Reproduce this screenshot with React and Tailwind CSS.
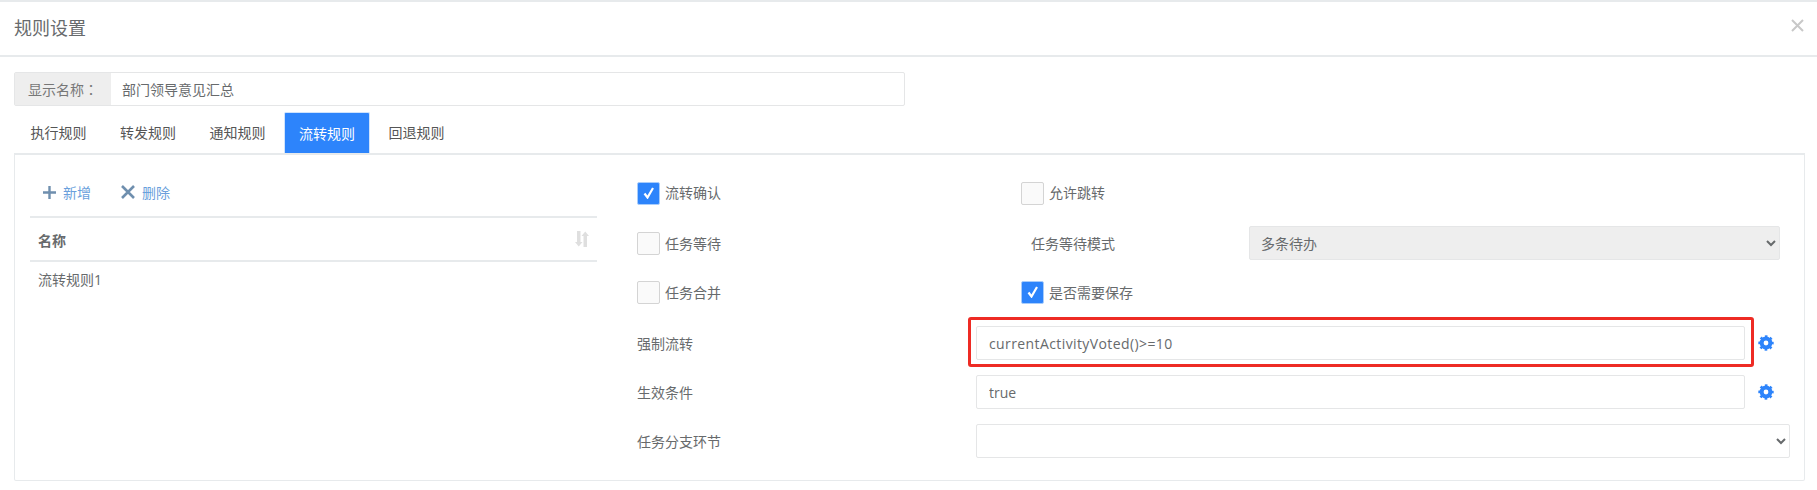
import React from "react";

function Box({ checked }) {
  return (
    <span className={"flex h-[23px] w-[23px] shrink-0 items-center justify-center rounded-[2px] border " + (checked ? "border-[#a9cdfb] bg-[#2d84fb]" : "border-[#d4d4d4] bg-[#fafafa]")}>
      {checked ? (
        <svg width="12" height="12" viewBox="0 0 12 12" fill="none" stroke="#fff" strokeWidth="2.2">
          <path d="M1.500 6.500 4.500 10.500 10 1" />
        </svg>
      ) : null}
    </span>
  );
}

function CheckItem({ checked, label, raised }) {
  return (
    <div className="flex items-center gap-[5px]">
      <Box checked={checked} />
      <span className={raised ? "pb-[1px]" : ""}>{label}</span>
    </div>
  );
}

function Tab({ label, active }) {
  return (
    <div className={"flex h-[41px] w-[86px] items-center justify-center " + (active ? "rounded-t-[2px] border border-b-0 border-[#cfe3fd] bg-[#2d84fb] text-white" : "text-[#555]")}>
      {label}
    </div>
  );
}

function Gear() {
  return (
    <svg width="16" height="16" viewBox="0 0 16 16" fill="none" stroke="currentColor" className="ml-[13px] text-[#2d84fb]">
      <circle cx="8" cy="8" r="4.4" strokeWidth="4" />
      <circle cx="8" cy="8" r="6.6" strokeWidth="2.2" strokeDasharray="2.6 2.58" strokeDashoffset="1.3" />
    </svg>
  );
}

const field = "h-[34px] rounded-[2px] border border-[#e5e6e7] bg-white px-[12px] text-[14px] text-[#676a6c]";

export default function App() {
  return (
    <div className="h-[490px] w-full overflow-hidden border-t-2 border-[#e7eaec] bg-white font-['Open_Sans','Noto_Sans_CJK_SC',sans-serif] text-[14px] text-[#676a6c]">
      <div className="flex h-[55px] items-center justify-between border-b-2 border-[#e7eaec] pl-[14px] pr-[13px]">
        <span className="text-[18px]">规则设置</span>
        <svg width="13" height="13" viewBox="0 0 13 13" stroke="#c8c8c8" strokeWidth="2" className="mb-[6px]">
          <path d="M1 1 12 12M12 1 1 12" />
        </svg>
      </div>

      <div className="px-[14px] pt-[15px]">
        <div className="flex h-[34px] w-[891px] rounded-[2px] border border-[#e5e6e7]">
          <div className="flex w-[96px] items-center justify-center bg-[#eeeeee] text-[#777]">
            显示名称<span className="font-['Noto_Sans_CJK_TC']">：</span>
          </div>
          <div className="flex flex-1 items-center pl-[11px]">部门领导意见汇总</div>
        </div>

        <div className="mt-[6px] flex gap-[3.5px] pl-[1.5px]">
          <Tab label="执行规则" />
          <Tab label="转发规则" />
          <Tab label="通知规则" />
          <Tab label="流转规则" active />
          <Tab label="回退规则" />
        </div>

        <div className="flex h-[328px] w-[1791px] gap-[40px] rounded-b-[2px] border border-t-2 border-[#e7eaec] pl-[15px]">
          <div className="w-[567px]">
            <div className="flex h-[61px] items-center pl-[13px] pt-[13px] text-[#6a9fdc]">
              <svg width="13" height="13" viewBox="0 0 13 13" stroke="#6f8fae" strokeWidth="2.4">
                <path d="M6.500 0V13M0 6.500H13" />
              </svg>
              <span className="ml-[7px]">新增</span>
              <svg width="14" height="14" viewBox="0 0 14 14" stroke="#6f8fae" strokeWidth="2.6" className="ml-[30px]">
                <path d="M1 1 13 13M13 1 1 13" />
              </svg>
              <span className="ml-[7px]">删除</span>
            </div>
            <div className="flex h-[46px] items-center justify-between border-y-2 border-[#e7eaec] pl-[8px] pr-[8px] font-semibold text-[#676a6c]">
              <span className="pt-[2px]">名称</span>
              <svg width="14" height="16" viewBox="0 0 14 16" className="text-[#dfdfdf]" fill="currentColor">
                <path d="M2 0h3.500v11H7.500L3.750 15.500 0 11H2z" />
                <path d="M8.500 16h3.500V5H14L10.250.5 6.500 5H8.500z" />
              </svg>
            </div>
            <div className="pl-[8px] pt-[7px]">流转规则1</div>
          </div>

          <div className="flex-1 pt-[21px]">
            <div className="flex h-[34px] items-center">
              <div className="w-[384px]"><CheckItem checked raised label="流转确认" /></div>
              <CheckItem raised label="允许跳转" />
            </div>
            <div className="mt-[16px] flex h-[34px] items-center">
              <div className="w-[384px]"><CheckItem label="任务等待" /></div>
              <div className="w-[228px] pl-[10px]">任务等待模式</div>
              <select disabled className={field + " w-[531px] !bg-[#eeeeee] pl-[7px]"} defaultValue="多条待办">
                <option>多条待办</option>
              </select>
            </div>
            <div className="mt-[15px] flex h-[34px] items-center">
              <div className="w-[384px]"><CheckItem label="任务合并" /></div>
              <CheckItem checked label="是否需要保存" />
            </div>
            <div className="relative mt-[17px] flex h-[34px] items-center">
              <div className="w-[339px]">强制流转</div>
              <input readOnly value="currentActivityVoted()>=10" className={field + " w-[769px] tracking-[0.4px]"} />
              <Gear />
              <div className="pointer-events-none absolute left-[331px] top-[-9px] h-[50px] w-[786px] rounded-[3px] border-[3px] border-[#ee2b24]" />
            </div>
            <div className="mt-[15px] flex h-[34px] items-center">
              <div className="w-[339px]">生效条件</div>
              <input readOnly value="true" className={field + " w-[769px]"} />
              <Gear />
            </div>
            <div className="mt-[15px] flex h-[34px] items-center">
              <div className="w-[339px]">任务分支环节</div>
              <select className={field + " w-[814px]"}>
                <option></option>
              </select>
            </div>
          </div>
        </div>
      </div>
    </div>
  );
}
